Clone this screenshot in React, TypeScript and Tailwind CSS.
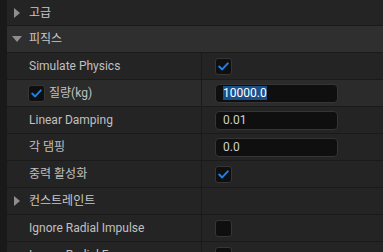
import React from "react";

const FONT = "font-['Roboto','Noto_Sans_CJK_KR',sans-serif]";

function Check({ checked }: { checked: boolean }) {
  return (
    <div className="w-[17px] h-[17px] rounded-[3px] bg-[#0f0f0f] border border-[#363636] flex items-center justify-center">
      {checked && (
        <svg width="11" height="9" viewBox="0 0 11 9">
          <path d="M1.2 4.6 L4.2 7.4 L9.8 1.4" fill="none" stroke="#1f7fe8" strokeWidth="2" strokeLinecap="round" strokeLinejoin="round" />
        </svg>
      )}
    </div>
  );
}

function Arrow({ open }: { open?: boolean }) {
  return open ? (
    <svg width="10" height="6" viewBox="0 0 10 6" className="ml-[5px] mr-[7px]">
      <path d="M0 0 L10 0 L5 6 Z" fill="#8e8e8e" />
    </svg>
  ) : (
    <svg width="6" height="10" viewBox="0 0 6 10" className="ml-[7px] mr-[9px]">
      <path d="M0 0 L6 5 L0 10 Z" fill="#8e8e8e" />
    </svg>
  );
}

function Input({ value, selected }: { value: string; selected?: boolean }) {
  return (
    <div className="w-[123px] h-[19px] rounded-[4px] bg-[#0f0f0f] border border-[#353535] flex items-center pl-[7px] text-[12px] text-[#d0d0d0]">
      {selected ? <span className="bg-[#1b4f8a] text-white leading-[14px]">{value}</span> : value}
    </div>
  );
}

function Category({ label, open, dark }: { label: string; open?: boolean; dark?: boolean }) {
  return (
    <div className={`h-[27px] flex items-center border-b border-[#1a1a1a] ${dark ? "bg-[#242424]" : "bg-[#2f2f2f]"}`}>
      <Arrow open={open} />
      <span className="text-[12px] text-[#c8c8c8]">{label}</span>
    </div>
  );
}

function Row({
  label,
  children,
  lead,
  hover,
}: {
  label: string;
  children?: React.ReactNode;
  lead?: React.ReactNode;
  hover?: boolean;
}) {
  return (
    <div className={`h-[27px] flex border-b border-[#1a1a1a] ${hover ? "bg-[#2b2b2b]" : "bg-[#242424]"}`}>
      <div className="w-[195px] flex items-center pl-[22px] border-r border-[#1a1a1a] text-[12px] text-[#c0c0c0]">
        {lead}
        {label}
      </div>
      <div className="flex-1 flex items-center pl-[13px]">{children}</div>
    </div>
  );
}

export default function App() {
  return (
    <div className={`w-[383px] h-[252px] overflow-hidden bg-[#191919] pl-[7px] ${FONT}`}>
      <div className="h-[26px] flex items-center border-b border-[#1a1a1a] bg-[#242424]">
        <Arrow />
        <span className="text-[12px] text-[#c8c8c8]">고급</span>
      </div>
      <Category label="피직스" open />
      <Row label="Simulate Physics">
        <Check checked />
      </Row>
      <Row
        label="질량(kg)"
        hover
        lead={
          <div className="-ml-[1px] mr-[4px]">
            <Check checked />
          </div>
        }
      >
        <Input value="10000.0" selected />
      </Row>
      <Row label="Linear Damping">
        <Input value="0.01" />
      </Row>
      <Row label="각 댐핑">
        <Input value="0.0" />
      </Row>
      <Row label="중력 활성화">
        <Check checked />
      </Row>
      <div className="h-[27px] flex border-b border-[#1a1a1a] bg-[#242424]">
        <div className="w-[195px] flex items-center border-r border-[#1a1a1a]">
          <Arrow />
          <span className="text-[12px] text-[#c8c8c8] underline underline-offset-2 decoration-[#c8c8c8]/0">컨스트레인트</span>
        </div>
        <div className="flex-1" />
      </div>
      <Row label="Ignore Radial Impulse">
        <Check checked={false} />
      </Row>
      <Row label="Ignore Radial Force">
        <Check checked={false} />
      </Row>
    </div>
  );
}
